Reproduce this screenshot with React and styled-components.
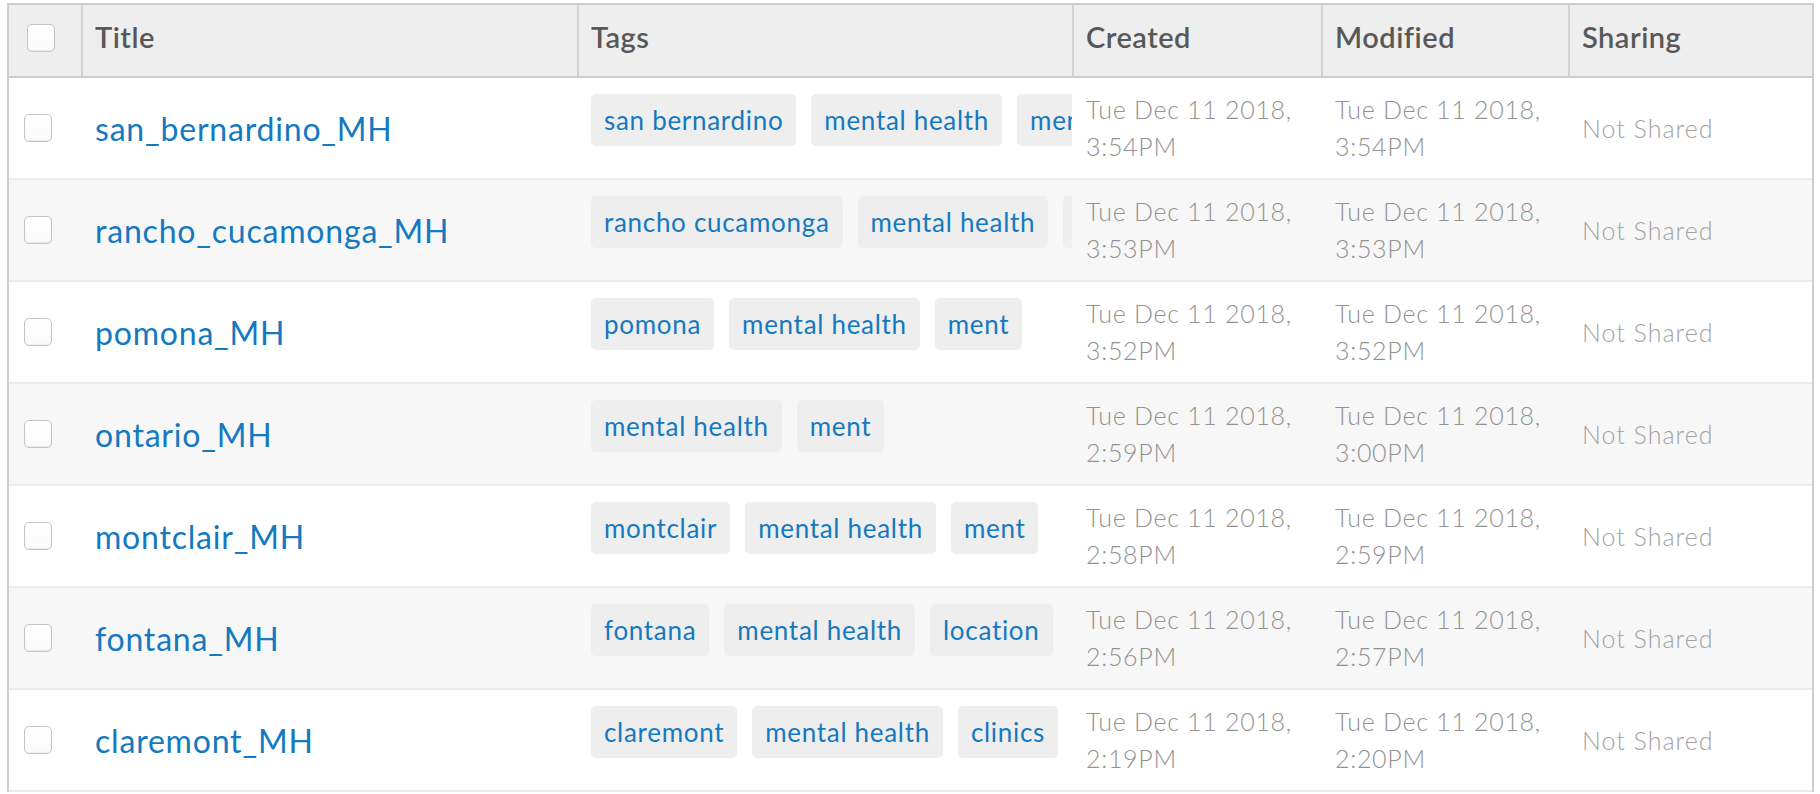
import React from 'react';
import styled, { createGlobalStyle } from 'styled-components';

const GlobalStyle = createGlobalStyle`
    body {
        margin: 0;
        background: #fff;
        font-family: Lato, "Open Sans", sans-serif;
    }
`;

const COLUMNS = '72px 496px 495px 249px 247px 244px';

const Page = styled.div`
    padding: 3px 6px 0 7px;
    height: 791px;
    overflow: hidden;
`;

const Table = styled.div`
    border: 2px solid #cdcdcd;
    border-bottom: none;
`;

const HeaderRow = styled.div`
    display: grid;
    grid-template-columns: ${COLUMNS};
    height: 71px;
    background: #eeeeee;
    border-bottom: 2px solid #cdcdcd;
`;

const HeaderCell = styled.div`
    display: flex;
    align-items: center;
    padding: 0 0 ${p => (p.$check ? '5px' : '9px')} ${p => (p.$check ? '18px' : '12px')};
    border-left: ${p => (p.$check ? 'none' : '2px solid #d2d2d2')};
    font-size: 29px;
    font-weight: 600;
    letter-spacing: 0.5px;
    color: #585858;
`;

const Row = styled.div`
    display: grid;
    grid-template-columns: ${COLUMNS};
    height: 100px;
    border-bottom: 2px solid #ececec;
    background: ${p => (p.$alt ? '#f7f7f7' : '#fff')};
`;

const Cell = styled.div`
    display: flex;
    align-items: center;
    padding-left: ${p => (p.$check ? '15px' : '14px')};
    overflow: hidden;
    min-width: 0;
`;

const TagCell = styled(Cell)`
    gap: 15px;
    flex-wrap: nowrap;
    padding-bottom: 16px;
`;

const Checkbox = styled.span`
    display: block;
    width: 26px;
    height: 26px;
    border: 1px solid #c4c4c4;
    border-radius: 5px;
    background: linear-gradient(#fff, #fafafa);
    box-shadow: inset 0 -1px 1px rgba(0, 0, 0, 0.06);
`;

const TitleLink = styled.a`
    font-size: 32px;
    letter-spacing: 0.8px;
    color: #1479c0;
    text-decoration: none;
    white-space: nowrap;
    cursor: pointer;
`;

const Tag = styled.span`
    flex-shrink: 0;
    padding: 10px 13px;
    border-radius: 5px;
    background: #eeeeee;
    color: #1479c0;
    font-size: 26px;
    letter-spacing: 0.7px;
    line-height: 32px;
    white-space: nowrap;
`;

const DateText = styled.div`
    font-size: 25px;
    font-weight: 300;
    letter-spacing: 0.7px;
    line-height: 37px;
    color: #929292;
    white-space: nowrap;
`;

const Sharing = styled.span`
    font-size: 25px;
    font-weight: 300;
    letter-spacing: 1px;
    color: #a2a2a2;
    white-space: nowrap;
`;

const items = [
    { title: 'san_bernardino_MH', tags: ['san bernardino', 'mental health', 'ment'], created: '3:54PM', modified: '3:54PM' },
    { title: 'rancho_cucamonga_MH', tags: ['rancho cucamonga', 'mental health', 'ment'], created: '3:53PM', modified: '3:53PM' },
    { title: 'pomona_MH', tags: ['pomona', 'mental health', 'ment'], created: '3:52PM', modified: '3:52PM' },
    { title: 'ontario_MH', tags: ['mental health', 'ment'], created: '2:59PM', modified: '3:00PM' },
    { title: 'montclair_MH', tags: ['montclair', 'mental health', 'ment'], created: '2:58PM', modified: '2:59PM' },
    { title: 'fontana_MH', tags: ['fontana', 'mental health', 'location'], created: '2:56PM', modified: '2:57PM' },
    { title: 'claremont_MH', tags: ['claremont', 'mental health', 'clinics'], created: '2:19PM', modified: '2:20PM' },
];

const DAY = 'Tue Dec 11 2018,';

const App = () => {
    return (
        <Page>
            <GlobalStyle />
            <Table>
                <HeaderRow>
                    <HeaderCell $check>
                        <Checkbox />
                    </HeaderCell>
                    <HeaderCell>Title</HeaderCell>
                    <HeaderCell>Tags</HeaderCell>
                    <HeaderCell>Created</HeaderCell>
                    <HeaderCell>Modified</HeaderCell>
                    <HeaderCell>Sharing</HeaderCell>
                </HeaderRow>

                {items.map((item, i) => (
                    <Row key={item.title} $alt={i % 2 === 1}>
                        <Cell $check>
                            <Checkbox />
                        </Cell>
                        <Cell>
                            <TitleLink>{item.title}</TitleLink>
                        </Cell>
                        <TagCell>
                            {item.tags.map(tag => (
                                <Tag key={tag}>{tag}</Tag>
                            ))}
                        </TagCell>
                        <Cell>
                            <DateText>
                                {DAY}
                                <br />
                                {item.created}
                            </DateText>
                        </Cell>
                        <Cell>
                            <DateText>
                                {DAY}
                                <br />
                                {item.modified}
                            </DateText>
                        </Cell>
                        <Cell>
                            <Sharing>Not Shared</Sharing>
                        </Cell>
                    </Row>
                ))}
            </Table>
        </Page>
    );
};

export default App;
